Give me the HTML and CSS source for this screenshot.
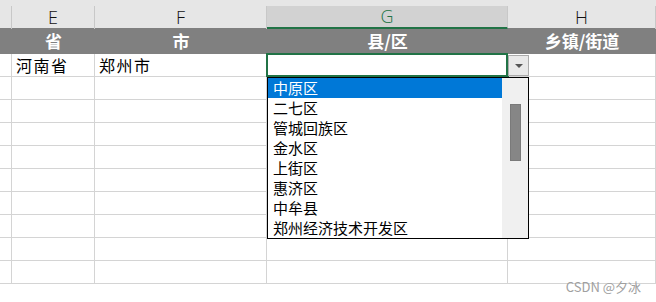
FILE: index.html
```html
<!DOCTYPE html>
<html lang="zh-CN">
<head>
  <meta charset="UTF-8">
  <title>行政区划下拉</title>
  <link rel="stylesheet" href="styles.css">
</head>
<body>
  <div class="sheet">
    <div class="col-heads">
      <div class="ch"></div>
      <div class="ch">E</div>
      <div class="ch">F</div>
      <div class="ch active">G</div>
      <div class="ch">H</div>
    </div>

    <div class="row title">
      <div class="cell"></div>
      <div class="cell">省</div>
      <div class="cell">市</div>
      <div class="cell">县/区</div>
      <div class="cell">乡镇/街道</div>
    </div>

    <div class="row data first">
      <div class="cell"></div>
      <div class="cell">河南省</div>
      <div class="cell">郑州市</div>
      <div class="cell"></div>
      <div class="cell"></div>
    </div>
    <div class="row data tall"><div class="cell"></div><div class="cell"></div><div class="cell"></div><div class="cell"></div><div class="cell"></div></div>
    <div class="row data"><div class="cell"></div><div class="cell"></div><div class="cell"></div><div class="cell"></div><div class="cell"></div></div>
    <div class="row data"><div class="cell"></div><div class="cell"></div><div class="cell"></div><div class="cell"></div><div class="cell"></div></div>
    <div class="row data"><div class="cell"></div><div class="cell"></div><div class="cell"></div><div class="cell"></div><div class="cell"></div></div>
    <div class="row data"><div class="cell"></div><div class="cell"></div><div class="cell"></div><div class="cell"></div><div class="cell"></div></div>
    <div class="row data"><div class="cell"></div><div class="cell"></div><div class="cell"></div><div class="cell"></div><div class="cell"></div></div>
    <div class="row data"><div class="cell"></div><div class="cell"></div><div class="cell"></div><div class="cell"></div><div class="cell"></div></div>
    <div class="row data"><div class="cell"></div><div class="cell"></div><div class="cell"></div><div class="cell"></div><div class="cell"></div></div>
    <div class="row data"><div class="cell"></div><div class="cell"></div><div class="cell"></div><div class="cell"></div><div class="cell"></div></div>

    <!-- aktive Zelle G + Dropdown -->
    <div class="active-cell"><span class="handle"></span></div>
    <div class="drop-btn"><span class="tri"></span></div>
    <div class="list">
      <ul class="items">
        <li class="sel">中原区</li>
        <li>二七区</li>
        <li>管城回族区</li>
        <li>金水区</li>
        <li>上街区</li>
        <li>惠济区</li>
        <li>中牟县</li>
        <li>郑州经济技术开发区</li>
      </ul>
      <div class="scroll"><div class="thumb"></div></div>
    </div>

    <div class="mark">CSDN @夕冰</div>
  </div>
</body>
</html>
```

FILE: styles.css
```css
body {
  margin: 0;
  background: #fff;
  font-family: "Noto Sans CJK SC", sans-serif;
}
.sheet {
  position: relative;
  width: 656px;
  height: 302px;
  overflow: hidden;
}
.col-heads,
.row {
  display: grid;
  grid-template-columns: 12px 83px 172px 241px 148px;
}
.col-heads {
  height: 28px;
  background: #e6e6e6;
  padding-top: 6px;
  box-sizing: border-box;
}
.ch {
  border-right: 1px solid #c8c8c8;
  font-family: "Open Sans", sans-serif;
  font-weight: 300;
  font-size: 18px;
  line-height: 22px;
  color: #111;
  text-align: center;
}
.ch.active {
  background: #d2d2d2;
  color: #217346;
  border-bottom: 2px solid #217346;
  line-height: 21px;
}
.row.title {
  height: 26px;
  background: #808080;
}
.title .cell {
  color: #fff;
  font-weight: bold;
  font-size: 17px;
  line-height: 25px;
  text-align: center;
}
.row.data {
  height: 23px;
}
.row.data.first {
  height: 22px;
}
.row.data.tall {
  height: 24px;
}
.data .cell {
  border-right: 1px solid #d4d4d4;
  border-bottom: 1px solid #d4d4d4;
  box-sizing: border-box;
  font-size: 16px;
  line-height: 22px;
  padding-left: 4px;
  letter-spacing: 1.5px;
  color: #000;
}
.active-cell {
  position: absolute;
  left: 266px;
  top: 53px;
  width: 242px;
  height: 24px;
  border: 2px solid #217346;
  box-sizing: border-box;
}
.handle {
  position: absolute;
  right: -3px;
  bottom: -3px;
  width: 3px;
  height: 3px;
  background: #217346;
}
.drop-btn {
  position: absolute;
  left: 508px;
  top: 55px;
  width: 21px;
  height: 21px;
  background: #e9e9e9;
  border: 1px solid #ababab;
  box-sizing: border-box;
}
.tri {
  position: absolute;
  left: 6px;
  top: 8px;
  border-left: 4px solid transparent;
  border-right: 4px solid transparent;
  border-top: 4px solid #555;
}
.list {
  position: absolute;
  left: 267px;
  top: 77px;
  width: 262px;
  height: 162px;
  border: 1px solid #000;
  box-sizing: border-box;
  background: #fff;
  display: flex;
}
.items {
  list-style: none;
  margin: 0;
  padding: 0;
  flex: 1;
}
.items li {
  height: 20px;
  line-height: 20px;
  font-size: 15px;
  padding-left: 5px;
  color: #000;
  white-space: nowrap;
}
.items li.sel {
  background: #0078d7;
  color: #fff;
}
.scroll {
  width: 26px;
  background: #f0f0f0;
  position: relative;
}
.thumb {
  position: absolute;
  left: 8px;
  top: 26px;
  width: 11px;
  height: 57px;
  background: #868686;
  border: 1px solid #7a7a7a;
  box-sizing: border-box;
}
.mark {
  position: absolute;
  right: 15px;
  bottom: 8px;
  font-family: "Noto Sans CJK SC", sans-serif;
  font-size: 13px;
  color: #a0a0a0;
  line-height: 14px;
}
```
